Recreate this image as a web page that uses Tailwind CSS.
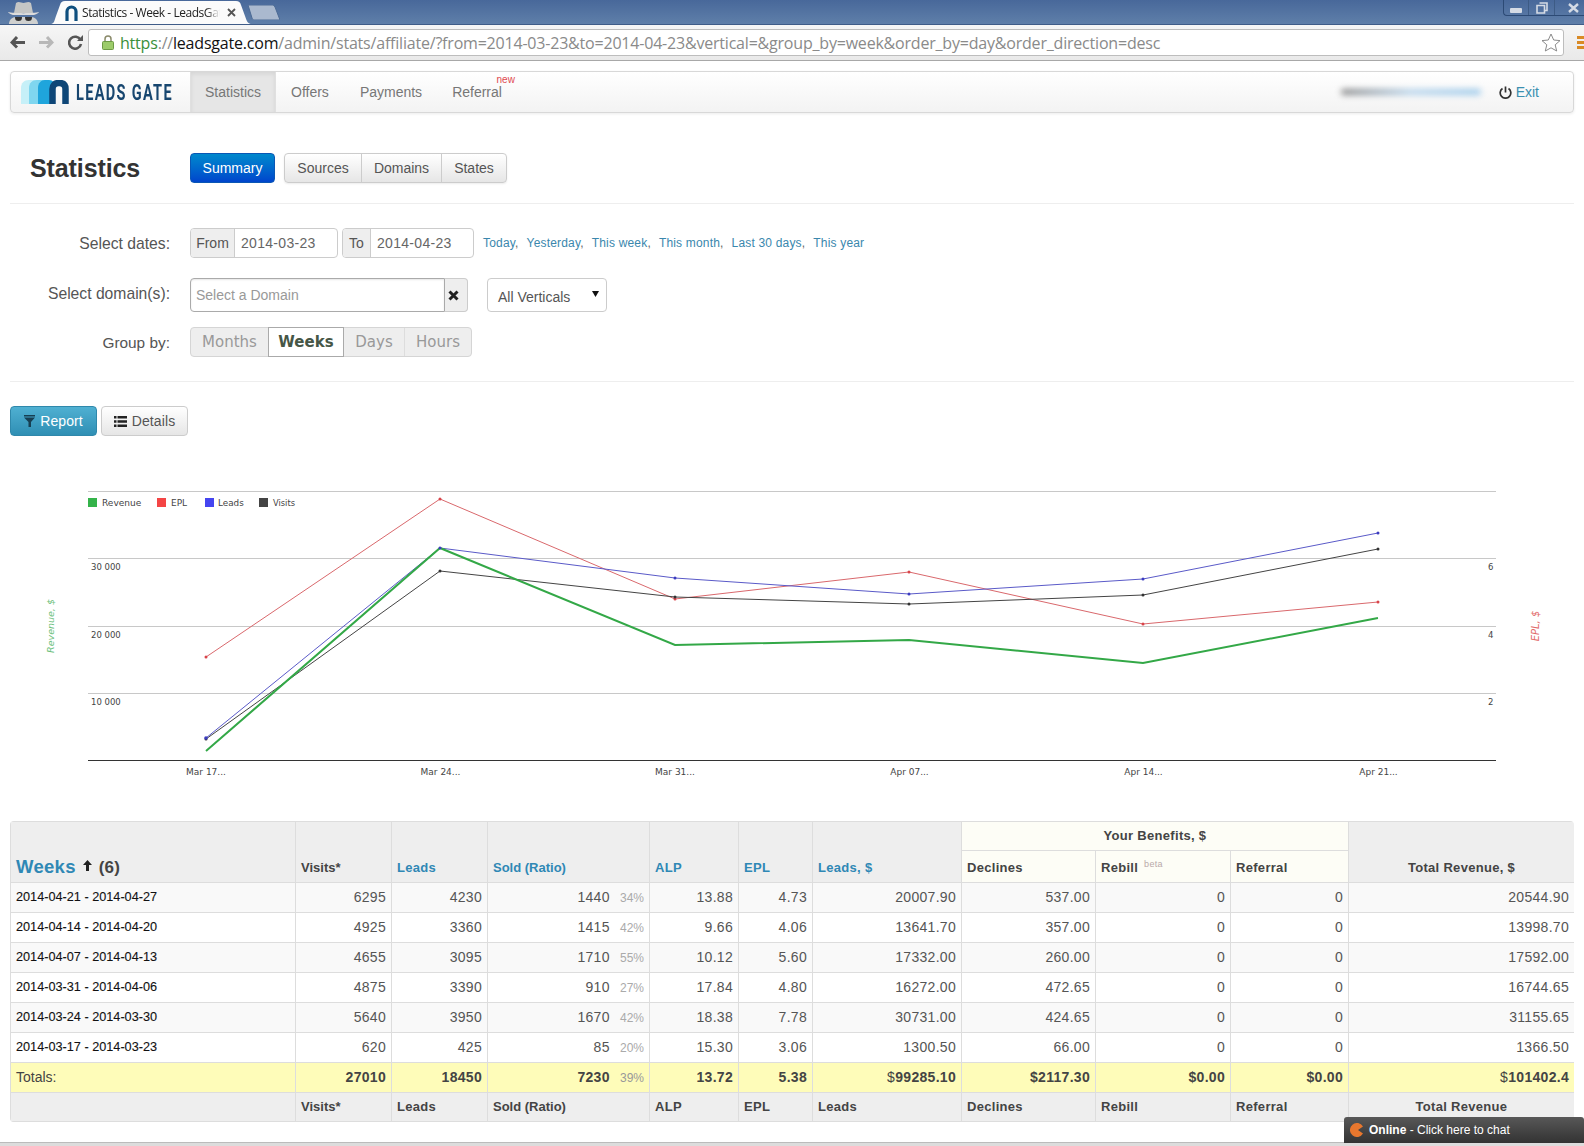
<!DOCTYPE html>
<html lang="en">
<head>
    <meta charset="UTF-8">
    <meta name="viewport" content="width=device-width, initial-scale=1.0">
    <title>Statistics - Week - LeadsGate</title>
    <script src="https://cdn.jsdelivr.net/npm/@tailwindcss/browser@4"></script>
</head>
<body class="bg-white">
<div class="relative h-[1146px] w-[1584px] overflow-hidden flex flex-col font-['Liberation_Sans',Arial,sans-serif] text-[#555]">

    <!-- browser title bar -->
    <div class="h-[25px] flex shrink-0 items-end bg-gradient-to-b from-[#48689a] to-[#5f7fa9] border-b border-[#3f5c88]">
        <svg class="ml-[7px] w-[33px] h-[24px]" viewBox="0 0 33 24">
            <path d="M2 24c0-4 3-7 7-7h15c4 0 7 3 7 7z" fill="#cfd0cf"/>
            <path d="M1 12c5 1.500 26 1.500 31 0-1 2-5 3-5 3H6s-4-1-5-3z" fill="#dcdcdc"/>
            <path d="M7 13l2-10c3-2 5 0 7.500 0s4.500-2 7.500 0l2 10z" fill="#c5c6c5"/>
            <path d="M8 17h7c0 3-1 4-3.500 4S8 20 8 17zM18 17h7c0 3-1 4-3.500 4S18 20 18 17z" fill="#333"/>
        </svg>
        <div class="relative ml-[10px] w-[202px] h-[23px] flex items-center">
            <svg class="absolute inset-0 w-full h-full" viewBox="0 0 202 23" preserveAspectRatio="none">
                <path d="M0 23C4 23 4 21 6 15L10 4C11 1 12 0 15 0H186C189 0 190 1 191 4L195 15C197 21 198 23 202 23Z" fill="#fbfbfb"/>
            </svg>
            <svg class="relative ml-[15px] w-[13px] h-[16px]" viewBox="0 0 13 16">
                <path d="M2 16V6.500a4.500 4.500 0 0 1 9 0V16" fill="none" stroke="#0f4f7e" stroke-width="3.200"/>
            </svg>
            <span class="relative ml-[4px] w-[138px] overflow-hidden whitespace-nowrap text-[12px] text-[#222] font-['Open_Sans',sans-serif] tracking-[-0.45px] [mask-image:linear-gradient(to_right,black_90%,transparent)]">Statistics - Week - LeadsGate</span>
            <svg class="relative ml-[7px] w-[9px] h-[9px]" viewBox="0 0 9 9"><path d="M1 1l7 7M8 1L1 8" stroke="#555" stroke-width="1.800"/></svg>
        </div>
        <svg class="ml-[-4px] mb-[4px] w-[32px] h-[15px]" viewBox="0 0 32 15">
            <path d="M0 0H24C25 0 26 .5 27 2L32 15H6C5 15 4.500 14 4 13Z" fill="#aab9cf" stroke="#4c6a94"/>
        </svg>
        <div class="ml-auto self-start flex h-[16px] w-[81px] border-l border-b border-[#2c4a75] rounded-bl-[4px] text-[#e6ebf2]">
            <div class="w-[25px] flex items-end justify-center pb-[2px] border-r border-[#3d5b85]"><span class="block w-[12px] h-[5px] bg-[#d5dbe5] rounded-[1px]"></span></div>
            <div class="w-[26px] flex items-center justify-center border-r border-[#3d5b85]">
                <svg class="w-[12px] h-[12px]" viewBox="0 0 12 12"><path d="M3.500 1h7.500v7.500h-2M1 3.500h7.500V11H1z" fill="none" stroke="#d5dbe5" stroke-width="1.600"/></svg>
            </div>
            <div class="flex-1 flex items-center justify-center pl-[8px]">
                <svg class="w-[11px] h-[10px]" viewBox="0 0 11 10"><path d="M1 1l9 8M10 1L1 9" stroke="#d5dbe5" stroke-width="2.400"/></svg>
            </div>
        </div>
    </div>

    <!-- browser toolbar -->
    <div class="h-[36px] shrink-0 flex items-center bg-gradient-to-b from-[#f6f6f6] to-[#e9e9e9] border-b border-[#a8a8a8]">
        <svg class="ml-[10px] w-[15px] h-[13px]" viewBox="0 0 15 13"><path d="M7 1L2 6.500l5 5M2 6.500h13" fill="none" stroke="#555" stroke-width="3"/></svg>
        <svg class="ml-[14px] w-[15px] h-[13px]" viewBox="0 0 15 13"><path d="M8 1l5 5.500-5 5M13 6.500H0" fill="none" stroke="#b8b8b8" stroke-width="3"/></svg>
        <svg class="ml-[14px] w-[15px] h-[15px]" viewBox="0 0 15 15"><path d="M12.500 5A6 6 0 1 0 13 9" fill="none" stroke="#555" stroke-width="2.600"/><path d="M9 6h6V0z" fill="#555"/></svg>
        <div class="ml-[5px] w-[1476px] h-[27px] flex items-center bg-white border border-[#bdbdbd] rounded-[3px]">
            <svg class="ml-[13px] w-[12px] h-[15px]" viewBox="0 0 12 15">
                <path d="M3 7V4a3 3 0 0 1 6 0v3" fill="none" stroke="#8a8a6a" stroke-width="1.500"/>
                <rect x="0.500" y="6.500" width="11" height="8" rx="1" fill="#9ccb6a" stroke="#6d9a45"/>
            </svg>
            <span class="ml-[6px] text-[16px] text-[#8a8a8a] whitespace-nowrap font-['Open_Sans',sans-serif] tracking-[-0.2px]"><span class="text-[#3a8f3a]">https</span>://<span class="text-[#111]">leadsgate.com</span>/admin/stats/affiliate/?from=2014-03-23&amp;to=2014-04-23&amp;vertical=&amp;group_by=week&amp;order_by=day&amp;order_direction=desc</span>
            <svg class="ml-auto mr-[2px] w-[20px] h-[19px]" viewBox="0 0 20 19"><path d="M10 1l2.700 6 6.300.600-4.800 4.200 1.500 6.200L10 14.800 4.300 18l1.500-6.200L1 7.600 7.300 7z" fill="#fff" stroke="#8a8a8a"/></svg>
        </div>
        <div class="ml-[13px] flex flex-col gap-[2px]">
            <span class="block w-[7px] h-[3px] bg-[#d98a26]"></span>
            <span class="block w-[7px] h-[3px] bg-[#d98a26]"></span>
            <span class="block w-[7px] h-[3px] bg-[#d98a26]"></span>
        </div>
    </div>

    <!-- page -->
    <main class="flex-1 px-[10px]">
        <nav class="mt-[10px] h-[42px] flex items-stretch rounded-[4px] border border-[#d8d8d8] bg-gradient-to-b from-white to-[#f3f3f3] shadow-[0_1px_3px_rgba(0,0,0,0.08)] text-[14px] text-[#777]">
            <div class="w-[179px] flex items-center">
                <svg class="ml-[10px] w-[48px] h-[24px]" viewBox="0 0 48 24">
                    <path d="M0 24V8c0-5 3-8 8-8h12v24z" fill="#c6f0f8"/>
                    <path d="M8 24V8c0-5 3-8 8-8h8c4 0 6 3 6 8v16z" fill="#7fd6ef"/>
                    <path d="M17 24V8c0-5 3-8 7-8h4c4 0 6 3 6 8v16z" fill="#1fa5dc"/>
                    <path d="M31.500 24V9c0-4 2.500-6 6-6h1c4 0 6 2 6 6v15" fill="none" stroke="#0e4677" stroke-width="6.500"/>
                </svg>
                <span class="ml-[7px] pt-[2px] w-[96px] whitespace-nowrap text-[22px] leading-none font-bold text-[#17466f] font-['Roboto',sans-serif] tracking-[2px] origin-left scale-x-[0.66]">LEADS GATE</span>
            </div>
            <a class="w-[86px] flex items-center justify-center bg-[#e6e6e6] shadow-[inset_0_2px_4px_rgba(0,0,0,0.08)] border-x border-[#e0e0e0]">Statistics</a>
            <a class="ml-[15px] flex items-center">Offers</a>
            <a class="ml-[31px] flex items-center">Payments</a>
            <a class="relative ml-[30px] flex items-center">Referral<span class="absolute right-[-13px] top-[0px] text-[10px] text-[#e0494f]">new</span></a>
            <div class="ml-auto mr-[34px] flex items-center">
                <span class="w-[140px] h-[6px] rounded-full blur-[3px] bg-gradient-to-r from-[#888] via-[#b9d5ec] to-[#9cc9ea]"></span>
                <svg class="ml-[18px] w-[13px] h-[13px]" viewBox="0 0 13 13"><path d="M3.500 2.500a5.300 5.300 0 1 0 6 0M6.500 0.500v6" fill="none" stroke="#333" stroke-width="1.700"/></svg>
                <a class="ml-[4px] text-[#3b8fb0]">Exit</a>
            </div>
        </nav>

        <div class="mt-[40px] flex items-center h-[30px]">
            <h1 class="ml-[20px] w-[160px] pt-[2px] text-[25px] font-bold text-[#333] tracking-[-0.1px]">Statistics</h1>
            <a class="w-[85px] h-[30px] flex items-center justify-center rounded-[4px] text-[14px] text-white bg-gradient-to-b from-[#0088cc] to-[#0044cc] border border-[#0a57b5]">Summary</a>
            <div class="ml-[9px] h-[30px] flex rounded-[4px] border border-[#ccc] text-[14px] text-[#555] bg-gradient-to-b from-white to-[#e6e6e6] shadow-[0_1px_2px_rgba(0,0,0,0.08)]">
                <a class="w-[77px] flex items-center justify-center border-r border-[#ccc]">Sources</a>
                <a class="w-[80px] flex items-center justify-center border-r border-[#ccc]">Domains</a>
                <a class="w-[64px] flex items-center justify-center">States</a>
            </div>
        </div>
        <hr class="mt-[20px] border-[#eee]">

        <div class="mt-[24px] flex items-center h-[30px]">
            <label class="w-[160px] pt-[2px] text-right text-[15.700px] text-[#555]">Select dates:</label>
            <div class="ml-[20px] w-[148px] h-[30px] flex rounded-[4px] border border-[#ccc] text-[14px] overflow-hidden">
                <span class="w-[44px] flex items-center justify-center bg-[#eee] border-r border-[#ccc]">From</span>
                <span class="flex items-center pl-[6px] tracking-[0.3px] text-[#666]">2014-03-23</span>
            </div>
            <div class="ml-[4px] w-[132px] h-[30px] flex rounded-[4px] border border-[#ccc] text-[14px] overflow-hidden">
                <span class="w-[28px] flex items-center justify-center bg-[#eee] border-r border-[#ccc]">To</span>
                <span class="flex items-center pl-[6px] tracking-[0.3px] text-[#666]">2014-04-23</span>
            </div>
            <div class="ml-[9px] flex gap-[8px] text-[12px] tracking-[0.18px] text-[#666] whitespace-nowrap">
                <span><a class="text-[#3a87ad]">Today</a>,</span>
                <span><a class="text-[#3a87ad]">Yesterday</a>,</span>
                <span><a class="text-[#3a87ad]">This week</a>,</span>
                <span><a class="text-[#3a87ad]">This month</a>,</span>
                <span><a class="text-[#3a87ad]">Last 30 days</a>,</span>
                <a class="text-[#3a87ad]">This year</a>
            </div>
        </div>

        <div class="mt-[20px] flex items-center h-[34px]">
            <label class="w-[160px] text-right text-[15.700px] text-[#555] mb-[2px]">Select domain(s):</label>
            <div class="ml-[20px] w-[255px] h-[34px] flex items-center pl-[5px] rounded-l-[4px] border border-[#aaa] text-[14px] text-[#999] shadow-[inset_0_1px_2px_rgba(0,0,0,0.1)]">Select a Domain</div>
            <div class="w-[23px] h-[34px] flex items-center justify-center pr-[5px] bg-[#eee] border border-l-0 border-[#ccc] rounded-r-[4px]">
                <svg class="w-[11px] h-[11px]" viewBox="0 0 11 11"><path d="M1.500 1.500l8 8M9.500 1.500l-8 8" stroke="#222" stroke-width="3"/></svg>
            </div>
            <div class="relative ml-[19px] w-[120px] h-[34px] flex items-center pl-[10px] pt-[5px] rounded-[4px] border border-[#ccc] text-[14px] text-[#555]">All Verticals
                <svg class="absolute right-[7px] top-[12px] w-[7px] h-[6px]" viewBox="0 0 7 6"><path d="M0 0h7L3.500 6z" fill="#111"/></svg>
            </div>
        </div>

        <div class="mt-[15px] flex items-center h-[30px]">
            <label class="w-[160px] pt-[2px] text-right text-[15.400px] text-[#555]">Group by:</label>
            <div class="ml-[20px] h-[30px] flex rounded-[4px] border border-[#d5d5d5] bg-[#eee] text-[15px] text-[#999] font-['DejaVu_Sans',sans-serif]">
                <span class="w-[77px] pt-[1px] flex items-center justify-center">Months</span>
                <span class="w-[76px] pt-[1px] flex items-center justify-center bg-white border border-[#aaa] -my-px font-bold text-[#465646]">Weeks</span>
                <span class="w-[61px] pt-[1px] flex items-center justify-center border-r border-[#ddd]">Days</span>
                <span class="w-[66px] pt-[1px] flex items-center justify-center">Hours</span>
            </div>
        </div>
        <hr class="mt-[24px] border-[#eee]">

        <div class="mt-[24px] flex gap-[4px] text-[14px]">
            <a class="w-[87px] h-[30px] flex items-center justify-center gap-[5px] rounded-[4px] text-white tracking-[0.1px] bg-gradient-to-b from-[#4fb0d2] to-[#2f8fb4] border border-[#2f88ab]">
                <svg class="w-[11px] h-[12px]" viewBox="0 0 11 12"><path d="M0 0h11v1.500H0zM0 2.500h11L7 7v5H4.500V7z" fill="#173f52"/></svg>
                Report
            </a>
            <a class="w-[87px] h-[30px] flex items-center justify-center gap-[5px] rounded-[4px] text-[#555] tracking-[0.1px] bg-gradient-to-b from-white to-[#e6e6e6] border border-[#ccc]">
                <svg class="w-[13px] h-[11px]" viewBox="0 0 13 11"><path d="M0 0h2.500v2.500H0zM3.500 0H13v2.500H3.500zM0 4.200h2.500v2.500H0zM3.500 4.200H13v2.500H3.500zM0 8.500h2.500V11H0zM3.500 8.500H13V11H3.500z" fill="#222"/></svg>
                Details
            </a>
        </div>

        <!-- chart, drawn in page coordinates -->
        <svg class="block mt-[44px] -ml-[10px] w-[1584px] h-[321px] font-['DejaVu_Sans',sans-serif]" viewBox="0 480 1584 321">
            <g stroke="#c8c8c8" stroke-width="1">
                <path d="M88 491.500H1496M88 558.500H1496M88 626.500H1496M88 693.500H1496" fill="none"/>
            </g>
            <path d="M88 760.500H1496" stroke="#333" stroke-width="1"/>

            <rect x="88" y="498" width="9" height="9" fill="#34b34a"/>
            <text x="102" y="505.500" font-size="9" fill="#444">Revenue</text>
            <rect x="157" y="498" width="9" height="9" fill="#f44545"/>
            <text x="171" y="505.500" font-size="9" fill="#444">EPL</text>
            <rect x="205" y="498" width="9" height="9" fill="#4545f0"/>
            <text x="218" y="505.500" font-size="8.800" fill="#444">Leads</text>
            <rect x="259" y="498" width="9" height="9" fill="#444"/>
            <text x="273" y="505.500" font-size="8.300" fill="#444">Visits</text>

            <g font-size="8.500" fill="#444">
                <text x="91" y="570">30 000</text>
                <text x="91" y="638">20 000</text>
                <text x="91" y="705">10 000</text>
                <text x="1488" y="570">6</text>
                <text x="1488" y="638">4</text>
                <text x="1488" y="705">2</text>
            </g>
            <g font-size="9" fill="#444" text-anchor="middle">
                <text x="206" y="775">Mar 17...</text>
                <text x="440.500" y="775">Mar 24...</text>
                <text x="675" y="775">Mar 31...</text>
                <text x="909.500" y="775">Apr 07...</text>
                <text x="1143.500" y="775">Apr 14...</text>
                <text x="1378.500" y="775">Apr 21...</text>
            </g>
            <text transform="translate(54 626) rotate(-90)" text-anchor="middle" font-size="9.500" font-style="italic" fill="#6cbf7c">Revenue, $</text>
            <text transform="translate(1539 626) rotate(-90)" text-anchor="middle" font-size="10" font-style="italic" fill="#e26a6a">EPL, $</text>

            <polyline points="206,657 440,499 675,599 909,572 1143,624 1378,602" fill="none" stroke="#d9686c" stroke-width="1"/>
            <polyline points="206,739 440,571 675,597 909,604 1143,595 1378,549" fill="none" stroke="#444" stroke-width="1"/>
            <polyline points="206,738 440,548 675,578 909,594 1143,579 1378,533" fill="none" stroke="#5a5ac8" stroke-width="1"/>
            <polyline points="206,751 440,548 675,645 909,640 1143,663 1378,618" fill="none" stroke="#33a847" stroke-width="2"/>
            <g fill="#d9444a">
                <circle cx="206" cy="657" r="1.500"/><circle cx="440" cy="499" r="1.500"/><circle cx="675" cy="599" r="1.500"/><circle cx="909" cy="572" r="1.500"/><circle cx="1143" cy="624" r="1.500"/><circle cx="1378" cy="602" r="1.500"/>
            </g>
            <g fill="#333">
                <circle cx="206" cy="739" r="1.500"/><circle cx="440" cy="571" r="1.500"/><circle cx="675" cy="597" r="1.500"/><circle cx="909" cy="604" r="1.500"/><circle cx="1143" cy="595" r="1.500"/><circle cx="1378" cy="549" r="1.500"/>
            </g>
            <g fill="#3c3cc0">
                <circle cx="206" cy="738" r="1.800"/><circle cx="440" cy="548" r="1.500"/><circle cx="675" cy="578" r="1.500"/><circle cx="909" cy="594" r="1.500"/><circle cx="1143" cy="579" r="1.500"/><circle cx="1378" cy="533" r="1.500"/>
            </g>
        </svg>

        <div class="mt-[20px] rounded-[4px] overflow-hidden">
            <table class="w-[1564px] table-fixed border-collapse text-[14px] tracking-[0.3px] text-[#555] [&_td]:border [&_td]:border-[#ddd] [&_td]:px-[5px] [&_td]:text-right [&_th]:border [&_th]:border-[#ddd] [&_th]:px-[5px] [&_th]:text-left [&_th]:text-[13px] [&_th]:text-[#444] [&_th]:font-bold [&_a]:text-[#2f88b5]">
                <colgroup>
                    <col class="w-[285px]"><col class="w-[96px]"><col class="w-[96px]"><col class="w-[162px]"><col class="w-[89px]"><col class="w-[74px]"><col class="w-[149px]"><col class="w-[134px]"><col class="w-[135px]"><col class="w-[118px]"><col class="w-[226px]">
                </colgroup>
                <thead>
                    <tr class="h-[29px] bg-[#eee]">
                        <th rowspan="2" class="align-bottom pb-[1px]"><a class="text-[18.500px]">Weeks</a> <svg class="inline-block ml-[3px] mb-[9px] w-[9px] h-[11px]" viewBox="0 0 9 11"><path d="M4.500 0L9 5H6v6H3V5H0z" fill="#222"/></svg> <span class="ml-[3px] text-[17px]">(6)</span></th>
                        <th rowspan="2" class="align-bottom pb-[5px] !tracking-normal">Visits*</th>
                        <th rowspan="2" class="align-bottom pb-[5px]"><a>Leads</a></th>
                        <th rowspan="2" class="align-bottom pb-[5px] !tracking-normal"><a>Sold (Ratio)</a></th>
                        <th rowspan="2" class="align-bottom pb-[5px]"><a>ALP</a></th>
                        <th rowspan="2" class="align-bottom pb-[5px]"><a>EPL</a></th>
                        <th rowspan="2" class="align-bottom pb-[5px]"><a>Leads, $</a></th>
                        <th colspan="3" class="bg-[#fdfdf6] !text-center">Your Benefits, $</th>
                        <th rowspan="2" class="align-bottom pb-[5px] !text-center">Total Revenue, $</th>
                    </tr>
                    <tr class="h-[32px]">
                        <th class="bg-[#fdfdf6] align-bottom pb-[5px]">Declines</th>
                        <th class="bg-[#fdfdf6] align-bottom pb-[5px]">Rebill <sup class="ml-[2px] text-[9px] font-normal text-[#b9a9a9]">beta</sup></th>
                        <th class="bg-[#fdfdf6] align-bottom pb-[5px]">Referral</th>
                    </tr>
                </thead>
                <tbody>
                    <tr class="h-[30px] bg-[#f9f9f9]">
                        <td class="!text-left text-[12.700px] !tracking-normal text-[#111] [-webkit-text-stroke:0.1px]">2014-04-21 - 2014-04-27</td><td>6295</td><td>4230</td><td>1440 <span class="ml-[6px] text-[12px] tracking-normal text-[#aaa]">34%</span></td><td>13.88</td><td>4.73</td><td>20007.90</td><td>537.00</td><td>0</td><td>0</td><td>20544.90</td>
                    </tr>
                    <tr class="h-[30px]">
                        <td class="!text-left text-[12.700px] !tracking-normal text-[#111] [-webkit-text-stroke:0.1px]">2014-04-14 - 2014-04-20</td><td>4925</td><td>3360</td><td>1415 <span class="ml-[6px] text-[12px] tracking-normal text-[#aaa]">42%</span></td><td>9.66</td><td>4.06</td><td>13641.70</td><td>357.00</td><td>0</td><td>0</td><td>13998.70</td>
                    </tr>
                    <tr class="h-[30px] bg-[#f9f9f9]">
                        <td class="!text-left text-[12.700px] !tracking-normal text-[#111] [-webkit-text-stroke:0.1px]">2014-04-07 - 2014-04-13</td><td>4655</td><td>3095</td><td>1710 <span class="ml-[6px] text-[12px] tracking-normal text-[#aaa]">55%</span></td><td>10.12</td><td>5.60</td><td>17332.00</td><td>260.00</td><td>0</td><td>0</td><td>17592.00</td>
                    </tr>
                    <tr class="h-[30px]">
                        <td class="!text-left text-[12.700px] !tracking-normal text-[#111] [-webkit-text-stroke:0.1px]">2014-03-31 - 2014-04-06</td><td>4875</td><td>3390</td><td>910 <span class="ml-[6px] text-[12px] tracking-normal text-[#aaa]">27%</span></td><td>17.84</td><td>4.80</td><td>16272.00</td><td>472.65</td><td>0</td><td>0</td><td>16744.65</td>
                    </tr>
                    <tr class="h-[30px] bg-[#f9f9f9]">
                        <td class="!text-left text-[12.700px] !tracking-normal text-[#111] [-webkit-text-stroke:0.1px]">2014-03-24 - 2014-03-30</td><td>5640</td><td>3950</td><td>1670 <span class="ml-[6px] text-[12px] tracking-normal text-[#aaa]">42%</span></td><td>18.38</td><td>7.78</td><td>30731.00</td><td>424.65</td><td>0</td><td>0</td><td>31155.65</td>
                    </tr>
                    <tr class="h-[30px]">
                        <td class="!text-left text-[12.700px] !tracking-normal text-[#111] [-webkit-text-stroke:0.1px]">2014-03-17 - 2014-03-23</td><td>620</td><td>425</td><td>85 <span class="ml-[6px] text-[12px] tracking-normal text-[#aaa]">20%</span></td><td>15.30</td><td>3.06</td><td>1300.50</td><td>66.00</td><td>0</td><td>0</td><td>1366.50</td>
                    </tr>
                    <tr class="h-[30px] bg-[#fefcb9] font-bold text-[#444]">
                        <td class="!text-left font-normal !tracking-normal">Totals:</td><td>27010</td><td>18450</td><td>7230 <span class="ml-[6px] text-[12px] font-normal tracking-normal text-[#999]">39%</span></td><td>13.72</td><td>5.38</td><td><span class="font-normal">$</span>99285.10</td><td>$2117.30</td><td>$0.00</td><td>$0.00</td><td><span class="font-normal">$</span>101402.4</td>
                    </tr>
                </tbody>
                <tfoot>
                    <tr class="h-[29px] bg-[#eee]">
                        <th></th><th class="!tracking-normal">Visits*</th><th>Leads</th><th class="!tracking-normal">Sold (Ratio)</th><th>ALP</th><th>EPL</th><th>Leads</th><th>Declines</th><th>Rebill</th><th>Referral</th><th class="!text-center">Total Revenue</th>
                    </tr>
                </tfoot>
            </table>
        </div>
    </main>

    <div class="h-[4px] shrink-0 bg-[#dcdcdc] border-t border-[#bbb]"></div>

    <!-- chat widget -->
    <div class="absolute left-[1344px] top-[1117px] w-[240px] h-[26px] flex items-center rounded-t-[3px] bg-gradient-to-b from-[#585858] to-[#333] text-[12px] text-white">
        <svg class="ml-[6px] w-[14px] h-[14px]" viewBox="0 0 14 14"><path d="M13 3.500A7 7 0 1 0 13 10.500L8 7z" fill="#e8772e"/></svg>
        <span class="ml-[5px]"><b>Online</b> - Click here to chat</span>
    </div>
</div>
</body>
</html>
